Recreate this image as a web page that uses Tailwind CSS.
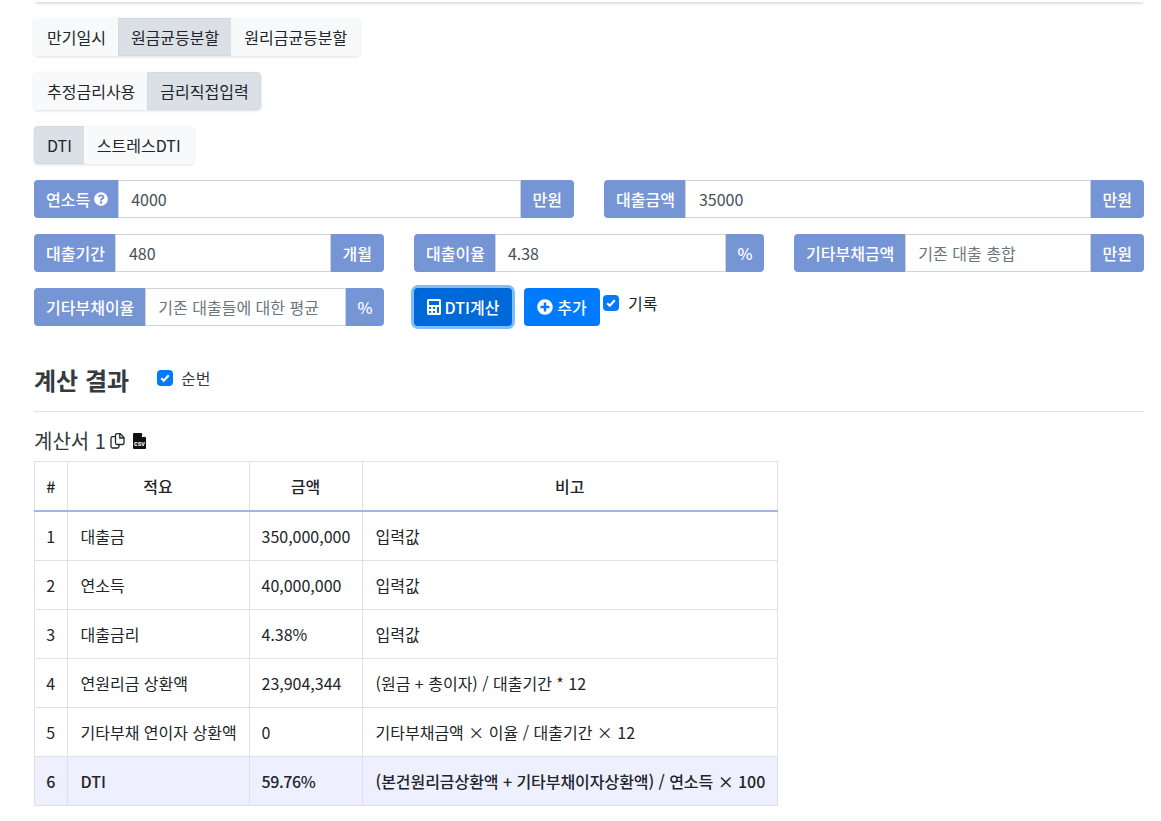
<!DOCTYPE html>
<html lang="ko">
<head>
    <meta charset="UTF-8">
    <meta name="viewport" content="width=device-width, initial-scale=1.0">
    <title>DTI 계산기</title>
    <script src="https://cdn.jsdelivr.net/npm/@tailwindcss/browser@4"></script>
</head>
<body class="bg-white text-[#212529] text-base leading-6 font-['Noto_Sans_CJK_KR','Noto_Sans',sans-serif] overflow-hidden">
    <div class="h-[821px] pl-[34px] pr-[17px]">
        <div class="h-[3px] ml-px bg-white border-b border-[#dee2e6] shadow-sm rounded-b"></div>

        <div class="mt-[15px] flex w-fit h-[38px] shadow-[0_1px_3px_rgba(0,0,0,0.12)] rounded">
            <button class="px-3 bg-[#f8f9fa] border border-[#f8f9fa]">만기일시</button>
            <button class="px-3 -ml-px bg-[#dae0e5] border border-[#d3d9df]">원금균등분할</button>
            <button class="px-3 -ml-px bg-[#f8f9fa] border border-[#f8f9fa] border-l-0 pl-[13px]">원리금균등분할</button>
        </div>
        <div class="mt-4 flex w-fit h-[38px] shadow-[0_1px_3px_rgba(0,0,0,0.12)] rounded">
            <button class="px-3 bg-[#f8f9fa] border border-[#f8f9fa] rounded-l">추정금리사용</button>
            <button class="pl-3 pr-[11px] -ml-px bg-[#dae0e5] border border-[#d3d9df] rounded-r">금리직접입력</button>
        </div>
        <div class="mt-4 flex w-fit h-[38px] shadow-[0_1px_3px_rgba(0,0,0,0.12)] rounded">
            <button class="px-3 bg-[#dae0e5] border border-[#d3d9df] rounded-l">DTI</button>
            <button class="pr-3 -ml-px bg-[#f8f9fa] border border-[#f8f9fa] border-l-0 pl-[13px] rounded-r">스트레스DTI</button>
        </div>

        <div class="mt-4 flex gap-[30px]">
            <div class="w-[540px] flex h-[38px]">
                <span class="pl-3 pr-[10px] flex items-center gap-1 bg-[#7695d4] text-white font-medium rounded-l">연소득
                    <svg class="w-[14px] h-[14px]" viewBox="0 0 512 512" fill="currentColor"><path d="M504 256c0 137-111 248-248 248S8 393 8 256 119 8 256 8s248 111 248 248zM262.700 90c-54.500 0-89.300 23-116.500 63.800-3.500 5.300-2.400 12.400 2.700 16.300l34.700 26.300c5.200 3.900 12.600 3 16.700-2.100 17.900-22.700 30.100-35.800 57.300-35.800 20.400 0 45.700 13.100 45.700 32.900 0 15-12.400 22.700-32.500 34-23.500 13.200-54.600 29.600-54.600 70.600V300c0 6.600 5.400 12 12 12h56c6.600 0 12-5.400 12-12v-1.300c0-28.500 83.200-29.600 83.200-106.700 0-58-60.200-102-116.500-102zM256 338c-25.400 0-46 20.600-46 46 0 25.400 20.600 46 46 46s46-20.600 46-46c0-25.400-20.600-46-46-46z"/></svg>
                </span>
                <input class="flex-1 min-w-0 px-3 border border-[#ced4da] text-[#495057] outline-none" value="4000">
                <span class="px-3 flex items-center bg-[#7695d4] text-white font-medium rounded-r">만원</span>
            </div>
            <div class="w-[540px] flex h-[38px]">
                <span class="pl-3 pr-[10px] flex items-center bg-[#7695d4] text-white font-medium rounded-l">대출금액</span>
                <input class="flex-1 min-w-0 pl-[13px] pr-3 border border-[#ced4da] text-[#495057] outline-none" value="35000">
                <span class="px-3 flex items-center bg-[#7695d4] text-white font-medium rounded-r">만원</span>
            </div>
        </div>

        <div class="mt-4 flex gap-[30px]">
            <div class="w-[350px] flex h-[38px]">
                <span class="pl-3 pr-[10px] flex items-center bg-[#7695d4] text-white font-medium rounded-l">대출기간</span>
                <input class="flex-1 min-w-0 pl-[13px] pr-3 border border-[#ced4da] text-[#495057] outline-none" value="480">
                <span class="px-3 flex items-center bg-[#7695d4] text-white font-medium rounded-r">개월</span>
            </div>
            <div class="w-[350px] flex h-[38px]">
                <span class="pl-3 pr-[10px] flex items-center bg-[#7695d4] text-white font-medium rounded-l">대출이율</span>
                <input class="flex-1 min-w-0 px-3 border border-[#ced4da] text-[#495057] outline-none" value="4.38">
                <span class="w-[38px] flex items-center justify-center bg-[#7695d4] text-white font-medium rounded-r">%</span>
            </div>
            <div class="w-[350px] flex h-[38px]">
                <span class="pl-3 pr-[11px] flex items-center bg-[#7695d4] text-white font-medium rounded-l">기타부채금액</span>
                <input class="flex-1 min-w-0 px-3 border border-[#ced4da] text-[#495057] outline-none placeholder:text-[#6c757d]" placeholder="기존 대출 총합">
                <span class="px-3 flex items-center bg-[#7695d4] text-white font-medium rounded-r">만원</span>
            </div>
        </div>

        <div class="mt-4 flex gap-[30px]">
            <div class="w-[350px] flex h-[38px]">
                <span class="pl-3 pr-[11px] flex items-center bg-[#7695d4] text-white font-medium rounded-l">기타부채이율</span>
                <input class="flex-1 min-w-0 px-3 border border-[#ced4da] text-[#495057] outline-none placeholder:text-[#6c757d]" placeholder="기존 대출들에 대한 평균">
                <span class="w-[38px] flex items-center justify-center bg-[#7695d4] text-white font-medium rounded-r">%</span>
            </div>
            <div class="flex items-start">
                <button class="h-[38px] w-[98px] flex items-center justify-center gap-1 bg-[#0069d9] text-white font-medium rounded ring-[3px] ring-[#80bdff]">
                    <svg class="w-[14px] h-4" viewBox="0 0 448 512" fill="currentColor"><path d="M400 0H48C22.400 0 0 22.400 0 48v416c0 25.600 22.400 48 48 48h352c25.600 0 48-22.400 48-48V48c0-25.600-22.400-48-48-48zM128 435.200c0 6.400-6.400 12.800-12.800 12.800H76.800c-6.400 0-12.800-6.400-12.800-12.800v-38.400c0-6.400 6.400-12.800 12.800-12.800h38.400c6.400 0 12.800 6.400 12.800 12.800v38.400zm0-128c0 6.400-6.400 12.800-12.800 12.800H76.800c-6.400 0-12.800-6.400-12.800-12.800v-38.400c0-6.400 6.400-12.800 12.800-12.800h38.400c6.400 0 12.800 6.400 12.800 12.800v38.400zm128 128c0 6.400-6.400 12.800-12.800 12.800h-38.400c-6.400 0-12.800-6.400-12.800-12.800v-38.400c0-6.400 6.400-12.800 12.800-12.800h38.400c6.400 0 12.800 6.400 12.800 12.800v38.400zm0-128c0 6.400-6.400 12.800-12.800 12.800h-38.400c-6.400 0-12.800-6.400-12.800-12.800v-38.400c0-6.400 6.400-12.800 12.800-12.800h38.400c6.400 0 12.800 6.400 12.800 12.800v38.400zm128 128c0 6.400-6.400 12.800-12.800 12.800h-38.400c-6.400 0-12.800-6.400-12.800-12.800V268.800c0-6.400 6.400-12.800 12.800-12.800h38.400c6.400 0 12.800 6.400 12.800 12.800v166.400zm0-256c0 6.400-6.400 12.800-12.800 12.800H76.800c-6.400 0-12.800-6.400-12.800-12.800V76.800C64 70.400 70.400 64 76.800 64h294.400c6.400 0 12.800 6.400 12.800 12.800v102.400z"/></svg>
                    DTI계산
                </button>
                <button class="ml-3 h-[38px] w-[76px] flex items-center justify-center gap-1 bg-[#007bff] text-white font-medium rounded">
                    <svg class="w-4 h-4" viewBox="0 0 512 512" fill="currentColor"><path d="M256 8C119 8 8 119 8 256s111 248 248 248 248-111 248-248S393 8 256 8zm144 276c0 6.600-5.400 12-12 12h-92v92c0 6.600-5.400 12-12 12h-56c-6.600 0-12-5.400-12-12v-92h-92c-6.600 0-12-5.400-12-12v-56c0-6.600 5.400-12 12-12h92v-92c0-6.600 5.400-12 12-12h56c6.600 0 12 5.400 12 12v92h92c6.600 0 12 5.400 12 12v56z"/></svg>
                    추가
                </button>
                <label class="ml-[3px] flex items-start gap-[9px] h-6 mt-[3px]">
                    <span class="mt-[4px] w-4 h-4 rounded bg-[#007bff] flex items-center justify-center">
                        <svg class="w-2.5 h-2.5" viewBox="0 0 8 8" fill="none" stroke="white" stroke-width="1.700"><path d="M1 4.200l2 1.900 4-4.300"/></svg>
                    </span>
                    기록
                </label>
            </div>
        </div>

        <div class="mt-[36px] flex items-center h-[36px]">
            <h2 class="w-[123px] text-[24px] font-bold leading-9 text-[#343a40]">계산 결과</h2>
            <span class="mb-[4px] w-4 h-4 rounded bg-[#007bff] flex items-center justify-center">
                <svg class="w-2.5 h-2.5" viewBox="0 0 8 8" fill="none" stroke="white" stroke-width="1.700"><path d="M1 4.200l2 1.900 4-4.300"/></svg>
            </span>
            <span class="mb-[4px] ml-2 text-[#343a40]">순번</span>
        </div>
        <hr class="mt-[13px] border-[#dee2e6]">

        <div class="mt-[14px] flex items-center h-[30px] text-[20px] leading-[30px] text-[#343a40]">
            계산서 1
            <svg class="ml-1 w-[15px] h-4" viewBox="0 0 15 16" fill="none" stroke="#212529" stroke-width="1.300"><path d="M5.500 3.600H2.500a1.500 1.500 0 0 0-1.500 1.500V13.500a1.500 1.500 0 0 0 1.500 1.500h5a1.500 1.500 0 0 0 1.500-1.500v-2"/><path d="M5.500 2.200a1.500 1.500 0 0 1 1.500-1.500h3.200l3.800 3.800V10a1.500 1.500 0 0 1-1.500 1.500H7a1.500 1.500 0 0 1-1.500-1.500z"/><path d="M9.800 1v4h4"/></svg>
            <svg class="ml-2 w-[13px] h-4" viewBox="0 0 13 16"><path fill="#111" d="M1 0H8.500L13 4.500V15a1 1 0 0 1-1 1H1a1 1 0 0 1-1-1V1a1 1 0 0 1 1-1z"/><path fill="#fff" d="M9 0.500l3.500 3.500H9z"/><text x="6.500" y="13" text-anchor="middle" fill="#fff" font-size="6.500" font-weight="700" font-family="Liberation Sans, sans-serif">csv</text></svg>
        </div>

        <table class="mt-[5px] w-[744px] table-fixed border-collapse border border-[#dee2e6] text-[#212529]">
            <colgroup>
                <col class="w-[32.500px]">
                <col class="w-[182px]">
                <col class="w-[113px]">
                <col>
            </colgroup>
            <thead>
                <tr class="h-[49px]">
                    <th class="border border-[#dee2e6] border-b-2 border-b-[#a0b6e4] font-medium text-center">#</th>
                    <th class="border border-[#dee2e6] border-b-2 border-b-[#a0b6e4] font-medium text-center">적요</th>
                    <th class="border border-[#dee2e6] border-b-2 border-b-[#a0b6e4] font-medium text-center">금액</th>
                    <th class="border border-[#dee2e6] border-b-2 border-b-[#a0b6e4] font-medium text-center">비고</th>
                </tr>
            </thead>
            <tbody>
                <tr class="h-[50px]"><td class="border border-[#dee2e6] text-center">1</td><td class="border border-[#dee2e6] px-[13px]">대출금</td><td class="border border-[#dee2e6] px-3">350,000,000</td><td class="border border-[#dee2e6] px-[13px]">입력값</td></tr>
                <tr class="h-[49px]"><td class="border border-[#dee2e6] text-center">2</td><td class="border border-[#dee2e6] px-[13px]">연소득</td><td class="border border-[#dee2e6] px-3">40,000,000</td><td class="border border-[#dee2e6] px-[13px]">입력값</td></tr>
                <tr class="h-[49px]"><td class="border border-[#dee2e6] text-center">3</td><td class="border border-[#dee2e6] px-[13px]">대출금리</td><td class="border border-[#dee2e6] px-3">4.38%</td><td class="border border-[#dee2e6] px-[13px]">입력값</td></tr>
                <tr class="h-[49px]"><td class="border border-[#dee2e6] text-center">4</td><td class="border border-[#dee2e6] px-[13px]">연원리금 상환액</td><td class="border border-[#dee2e6] px-3">23,904,344</td><td class="border border-[#dee2e6] px-[13px]">(원금 + 총이자) / 대출기간 * 12</td></tr>
                <tr class="h-[49px]"><td class="border border-[#dee2e6] text-center">5</td><td class="border border-[#dee2e6] px-[13px] whitespace-nowrap">기타부채 연이자 상환액</td><td class="border border-[#dee2e6] px-3">0</td><td class="border border-[#dee2e6] px-[13px]">기타부채금액 × 이율 / 대출기간 × 12</td></tr>
                <tr class="h-[49px] bg-[#eef0ff] font-medium"><td class="border border-[#dee2e6] text-center">6</td><td class="border border-[#dee2e6] px-[13px]">DTI</td><td class="border border-[#dee2e6] px-3 tracking-[-0.4px]">59.76%</td><td class="border border-[#dee2e6] px-[13px] tracking-[-0.05px] whitespace-nowrap">(본건원리금상환액 + 기타부채이자상환액) / 연소득 × 100</td></tr>
            </tbody>
        </table>
    </div>
</body>
</html>
